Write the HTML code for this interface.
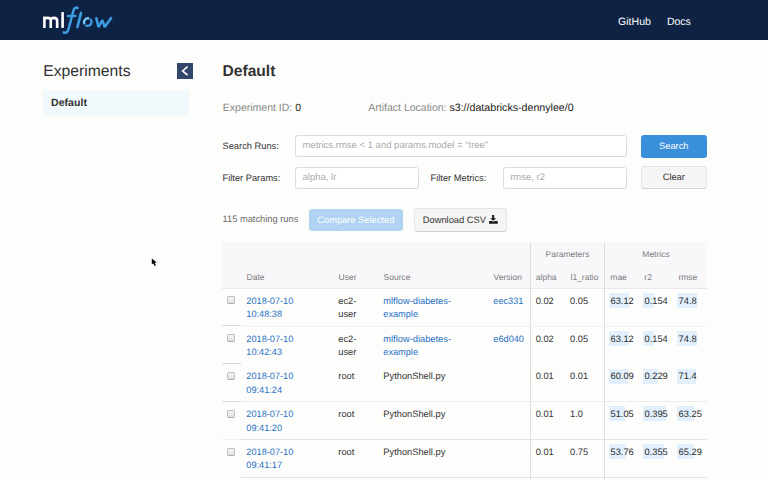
<!DOCTYPE html>
<html><head><meta charset="utf-8"><style>
html,body{margin:0;padding:0;width:768px;height:480px;overflow:hidden;background:#fdfdfc;}
body{position:relative;font-family:"Liberation Sans",sans-serif;}
.t{position:absolute;white-space:nowrap;line-height:1;text-rendering:geometricPrecision;}
.r{position:absolute;}
</style></head><body>
<div class="r" style="left:0.00px;top:0.00px;width:768.00px;height:40.00px;background:#0e2244"></div>
<svg class="r" style="left:0;top:0" width="130" height="40" viewBox="0 0 130 40">
<g fill="none" stroke="#fff" stroke-width="2.6" stroke-linecap="butt">
<path d="M44.4,27.9 V16.5 M44.4,19.6 C45.1,17.6 46.3,17.85 47.6,17.85 C49.6,17.85 50.75,18.9 50.75,20.6 V27.9 M50.75,20.6 C50.8,18.7 52.2,17.85 53.9,17.85 C56,17.85 57.15,18.9 57.15,20.8 V27.9"/>
<path d="M62.6,12.1 V27.9"/>
</g>
<g fill="none" stroke="#3d9de2" stroke-width="2.3" stroke-linecap="round">
<path d="M77.6,7.9 C76.2,7.1 74.3,7.5 73.5,10.4 L68.5,29.2 C67.7,32.4 65.3,33.4 63.7,32.4" stroke-width="2.5"/>
<path d="M66.9,16 H76.4" stroke-linecap="butt"/>
<path d="M81,12.9 L77.4,27.1" stroke-width="2.6"/>
<path d="M96.1,17.2 L98.4,27 L102.4,20.2 L104.7,27 L111.6,17.2" stroke-linejoin="bevel" stroke-linecap="butt" stroke-width="2.5"/>
</g>
<path d="M84.59,24.24 A3.85,3.85 0 0 1 89.29,18.63" fill="none" stroke="#72c8f4" stroke-width="2.3"/>
<path d="M90.22,19.17 A3.85,3.85 0 0 1 85.27,25.06" fill="none" stroke="#3d9de2" stroke-width="2.3"/>
</svg>
<div class="t" style="left:618.00px;top:17.03px;font-size:10.6px;color:#fff;font-weight:400;">GitHub</div>
<div class="t" style="left:666.90px;top:17.11px;font-size:10.5px;color:#fff;font-weight:400;">Docs</div>
<div class="t" style="left:43.30px;top:64.41px;font-size:15.7px;color:#333;font-weight:400;">Experiments</div>
<div class="r" style="left:177.00px;top:63.00px;width:16.00px;height:16.00px;background:#33476b"></div>
<svg class="r" style="left:177px;top:63px" width="16" height="16" viewBox="0 0 16 16"><path d="M10.6,3.6 L5.6,7.9 L10.6,12.2" fill="none" stroke="#fff" stroke-width="1.6"/></svg>
<div class="r" style="left:43.00px;top:90.00px;width:146.00px;height:26.00px;background:#f1f9fd"></div>
<div class="t" style="left:51.00px;top:97.53px;font-size:10.6px;color:#333;font-weight:700;">Default</div>
<div class="t" style="left:222.50px;top:64.49px;font-size:15.6px;color:#333;font-weight:700;">Default</div>
<div class="t" style="left:222.80px;top:102.61px;font-size:10.5px;color:#888;font-weight:400;">Experiment ID: <span style="color:#222">0</span></div>
<div class="t" style="left:368.30px;top:102.61px;font-size:10.5px;color:#888;font-weight:400;">Artifact Location: <span style="color:#222;font-size:10.65px">s3://databricks-dennylee/0</span></div>
<div class="t" style="left:222.50px;top:142.03px;font-size:9.3px;color:#333;font-weight:400;">Search Runs:</div>
<div class="r" style="left:295.00px;top:135.00px;width:332.00px;height:22.00px;border:1px solid #dcdcdc;border-radius:3px;background:#fff;box-sizing:border-box"></div>
<div class="t" style="left:302.50px;top:140.56px;font-size:9.5px;color:#aaa;font-weight:400;">metrics.rmse &lt; 1 and params.model = "tree"</div>
<div class="t" style="left:222.50px;top:174.03px;font-size:9.3px;color:#333;font-weight:400;">Filter Params:</div>
<div class="r" style="left:295.00px;top:167.00px;width:124.00px;height:22.00px;border:1px solid #dcdcdc;border-radius:3px;background:#fff;box-sizing:border-box"></div>
<div class="t" style="left:302.50px;top:172.56px;font-size:9.5px;color:#aaa;font-weight:400;">alpha, lr</div>
<div class="t" style="left:430.50px;top:174.03px;font-size:9.3px;color:#333;font-weight:400;">Filter Metrics:</div>
<div class="r" style="left:503.00px;top:167.00px;width:124.00px;height:22.00px;border:1px solid #dcdcdc;border-radius:3px;background:#fff;box-sizing:border-box"></div>
<div class="t" style="left:510.20px;top:172.56px;font-size:9.5px;color:#aaa;font-weight:400;">rmse, r2</div>
<div class="r" style="left:641.00px;top:135.00px;width:66.00px;height:23.00px;background:#3a8fda;border-radius:3px"></div>
<div class="t" style="left:640.6px;width:66.4px;text-align:center;top:141.53px;font-size:9.3px;color:#fff">Search</div>
<div class="r" style="left:641.00px;top:166.00px;width:66.00px;height:23.00px;background:#f5f5f5;border:1px solid #e5e5e5;border-bottom-color:#d3d3d3;border-radius:3px;box-sizing:border-box"></div>
<div class="t" style="left:640.6px;width:66.4px;text-align:center;top:173.43px;font-size:9.3px;color:#333">Clear</div>
<div class="t" style="left:222.50px;top:215.43px;font-size:9.3px;color:#6a6a6a;font-weight:400;">115 matching runs</div>
<div class="r" style="left:309.00px;top:209.00px;width:94.00px;height:22.00px;background:#b0d3f2;border-radius:3px"></div>
<div class="t" style="left:317.30px;top:216.03px;font-size:9.3px;color:#fff;font-weight:400;">Compare Selected</div>
<div class="r" style="left:414.00px;top:208.00px;width:93.00px;height:24.00px;background:#f5f5f5;border:1px solid #e5e5e5;border-bottom-color:#d3d3d3;border-radius:3px;box-sizing:border-box"></div>
<div class="t" style="left:422.70px;top:215.99px;font-size:9.35px;color:#333;font-weight:400;">Download CSV</div>
<svg class="r" style="left:480px;top:210px" width="24" height="20" viewBox="480 210 24 20"><path d="M492.1,215.1 H494.2 V218.2 H496.3 L493.15,220.8 L490,218.2 H492.1 Z" fill="#1e1e1e"/><path d="M489,221 H492.2 L493.15,221.9 L494.1,221 H497.8 V223.7 H489 Z" fill="#1e1e1e"/></svg>
<div class="r" style="left:222.00px;top:242.00px;width:485.00px;height:46.00px;background:#f8f8fb"></div>
<div class="r" style="left:222.00px;top:288.00px;width:485.00px;height:1.00px;background:#e9e9ed"></div>
<div class="r" style="left:530.00px;top:242.00px;width:1.00px;height:238.00px;background:#dddddd"></div>
<div class="r" style="left:604.00px;top:242.00px;width:1.00px;height:238.00px;background:#dddddd"></div>
<div class="t" style="left:545.50px;top:250.30px;font-size:8.5px;color:#7a7a7a;font-weight:400;">Parameters</div>
<div class="t" style="left:642.30px;top:250.30px;font-size:8.5px;color:#7a7a7a;font-weight:400;">Metrics</div>
<div class="t" style="left:246.60px;top:273.10px;font-size:8.5px;color:#7a7a7a;font-weight:400;">Date</div>
<div class="t" style="left:338.60px;top:273.10px;font-size:8.5px;color:#7a7a7a;font-weight:400;">User</div>
<div class="t" style="left:383.60px;top:273.10px;font-size:8.5px;color:#7a7a7a;font-weight:400;">Source</div>
<div class="t" style="left:493.60px;top:273.10px;font-size:8.5px;color:#7a7a7a;font-weight:400;">Version</div>
<div class="t" style="left:535.80px;top:273.10px;font-size:8.5px;color:#7a7a7a;font-weight:400;">alpha</div>
<div class="t" style="left:570.50px;top:273.10px;font-size:8.5px;color:#7a7a7a;font-weight:400;">l1_ratio</div>
<div class="t" style="left:610.30px;top:273.10px;font-size:8.5px;color:#7a7a7a;font-weight:400;">mae</div>
<div class="t" style="left:644.30px;top:273.10px;font-size:8.5px;color:#7a7a7a;font-weight:400;">r2</div>
<div class="t" style="left:678.40px;top:273.10px;font-size:8.5px;color:#7a7a7a;font-weight:400;">rmse</div>
<div class="r" style="left:227.00px;top:296.00px;width:8.00px;height:8.00px;border:1px solid #bdbdbd;border-bottom-color:#a8a8a8;border-radius:2px;background:linear-gradient(#f6f6f6,#e2e2e2);box-sizing:border-box"></div>
<div class="t" style="left:246.30px;top:296.81px;font-size:9.2px;color:#1f70c4;font-weight:400;">2018-07-10</div>
<div class="t" style="left:246.30px;top:310.11px;font-size:9.2px;color:#1f70c4;font-weight:400;">10:48:38</div>
<div class="t" style="left:338.30px;top:296.73px;font-size:9.3px;color:#333;font-weight:400;">ec2-</div>
<div class="t" style="left:338.30px;top:310.03px;font-size:9.3px;color:#333;font-weight:400;">user</div>
<div class="t" style="left:383.30px;top:296.73px;font-size:9.3px;color:#1f70c4;font-weight:400;">mlflow-diabetes-</div>
<div class="t" style="left:383.30px;top:310.11px;font-size:9.2px;color:#1f70c4;font-weight:400;">example</div>
<div class="t" style="left:493.30px;top:296.81px;font-size:9.2px;color:#1f70c4;font-weight:400;">eec331</div>
<div class="t" style="left:535.70px;top:296.73px;font-size:9.3px;color:#333;font-weight:400;">0.02</div>
<div class="t" style="left:570.00px;top:296.73px;font-size:9.3px;color:#333;font-weight:400;">0.05</div>
<div class="r" style="left:609.00px;top:293.00px;width:20.00px;height:15.00px;background:#e1f0fc"></div>
<div class="t" style="left:610.50px;top:296.73px;font-size:9.3px;color:#2a2a2a;font-weight:400;">63.12</div>
<div class="r" style="left:643.00px;top:293.00px;width:11.00px;height:15.00px;background:#e1f0fc"></div>
<div class="t" style="left:644.50px;top:296.73px;font-size:9.3px;color:#2a2a2a;font-weight:400;">0.154</div>
<div class="r" style="left:677.00px;top:293.00px;width:20.00px;height:15.00px;background:#e1f0fc"></div>
<div class="t" style="left:678.60px;top:296.73px;font-size:9.3px;color:#2a2a2a;font-weight:400;">74.8</div>
<div class="r" style="left:222.00px;top:325.00px;width:19.00px;height:1.00px;background:#dadada"></div>
<div class="r" style="left:241.00px;top:326.00px;width:466.00px;height:1.00px;background:#f1f1f3"></div>
<div class="r" style="left:227.00px;top:334.00px;width:8.00px;height:8.00px;border:1px solid #bdbdbd;border-bottom-color:#a8a8a8;border-radius:2px;background:linear-gradient(#f6f6f6,#e2e2e2);box-sizing:border-box"></div>
<div class="t" style="left:246.30px;top:334.61px;font-size:9.2px;color:#1f70c4;font-weight:400;">2018-07-10</div>
<div class="t" style="left:246.30px;top:347.91px;font-size:9.2px;color:#1f70c4;font-weight:400;">10:42:43</div>
<div class="t" style="left:338.30px;top:334.53px;font-size:9.3px;color:#333;font-weight:400;">ec2-</div>
<div class="t" style="left:338.30px;top:347.83px;font-size:9.3px;color:#333;font-weight:400;">user</div>
<div class="t" style="left:383.30px;top:334.53px;font-size:9.3px;color:#1f70c4;font-weight:400;">mlflow-diabetes-</div>
<div class="t" style="left:383.30px;top:347.91px;font-size:9.2px;color:#1f70c4;font-weight:400;">example</div>
<div class="t" style="left:493.30px;top:334.61px;font-size:9.2px;color:#1f70c4;font-weight:400;">e6d040</div>
<div class="t" style="left:535.70px;top:334.53px;font-size:9.3px;color:#333;font-weight:400;">0.02</div>
<div class="t" style="left:570.00px;top:334.53px;font-size:9.3px;color:#333;font-weight:400;">0.05</div>
<div class="r" style="left:609.00px;top:331.00px;width:20.00px;height:15.00px;background:#e1f0fc"></div>
<div class="t" style="left:610.50px;top:334.53px;font-size:9.3px;color:#2a2a2a;font-weight:400;">63.12</div>
<div class="r" style="left:643.00px;top:331.00px;width:11.00px;height:15.00px;background:#e1f0fc"></div>
<div class="t" style="left:644.50px;top:334.53px;font-size:9.3px;color:#2a2a2a;font-weight:400;">0.154</div>
<div class="r" style="left:677.00px;top:331.00px;width:20.00px;height:15.00px;background:#e1f0fc"></div>
<div class="t" style="left:678.60px;top:334.53px;font-size:9.3px;color:#2a2a2a;font-weight:400;">74.8</div>
<div class="r" style="left:222.00px;top:363.00px;width:19.00px;height:1.00px;background:#dadada"></div>
<div class="r" style="left:227.00px;top:372.00px;width:8.00px;height:8.00px;border:1px solid #bdbdbd;border-bottom-color:#a8a8a8;border-radius:2px;background:linear-gradient(#f6f6f6,#e2e2e2);box-sizing:border-box"></div>
<div class="t" style="left:246.30px;top:372.41px;font-size:9.2px;color:#1f70c4;font-weight:400;">2018-07-10</div>
<div class="t" style="left:246.30px;top:385.71px;font-size:9.2px;color:#1f70c4;font-weight:400;">09:41:24</div>
<div class="t" style="left:338.30px;top:372.33px;font-size:9.3px;color:#333;font-weight:400;">root</div>
<div class="t" style="left:383.30px;top:372.33px;font-size:9.3px;color:#333;font-weight:400;">PythonShell.py</div>
<div class="t" style="left:535.70px;top:372.33px;font-size:9.3px;color:#333;font-weight:400;">0.01</div>
<div class="t" style="left:570.00px;top:372.33px;font-size:9.3px;color:#333;font-weight:400;">0.01</div>
<div class="r" style="left:609.00px;top:369.00px;width:19.00px;height:15.00px;background:#e1f0fc"></div>
<div class="t" style="left:610.50px;top:372.33px;font-size:9.3px;color:#2a2a2a;font-weight:400;">60.09</div>
<div class="r" style="left:643.00px;top:369.00px;width:15.00px;height:15.00px;background:#e1f0fc"></div>
<div class="t" style="left:644.50px;top:372.33px;font-size:9.3px;color:#2a2a2a;font-weight:400;">0.229</div>
<div class="r" style="left:677.00px;top:369.00px;width:19.00px;height:15.00px;background:#e1f0fc"></div>
<div class="t" style="left:678.60px;top:372.33px;font-size:9.3px;color:#2a2a2a;font-weight:400;">71.4</div>
<div class="r" style="left:222.00px;top:401.00px;width:19.00px;height:1.00px;background:#dadada"></div>
<div class="r" style="left:241.00px;top:401.00px;width:466.00px;height:1.00px;background:#eeeeee"></div>
<div class="r" style="left:227.00px;top:410.00px;width:8.00px;height:8.00px;border:1px solid #bdbdbd;border-bottom-color:#a8a8a8;border-radius:2px;background:linear-gradient(#f6f6f6,#e2e2e2);box-sizing:border-box"></div>
<div class="t" style="left:246.30px;top:410.21px;font-size:9.2px;color:#1f70c4;font-weight:400;">2018-07-10</div>
<div class="t" style="left:246.30px;top:423.51px;font-size:9.2px;color:#1f70c4;font-weight:400;">09:41:20</div>
<div class="t" style="left:338.30px;top:410.13px;font-size:9.3px;color:#333;font-weight:400;">root</div>
<div class="t" style="left:383.30px;top:410.13px;font-size:9.3px;color:#333;font-weight:400;">PythonShell.py</div>
<div class="t" style="left:535.70px;top:410.13px;font-size:9.3px;color:#333;font-weight:400;">0.01</div>
<div class="t" style="left:570.00px;top:410.13px;font-size:9.3px;color:#333;font-weight:400;">1.0</div>
<div class="r" style="left:609.00px;top:406.00px;width:16.00px;height:15.00px;background:#e1f0fc"></div>
<div class="t" style="left:610.50px;top:410.13px;font-size:9.3px;color:#2a2a2a;font-weight:400;">51.05</div>
<div class="r" style="left:643.00px;top:406.00px;width:23.00px;height:15.00px;background:#e1f0fc"></div>
<div class="t" style="left:644.50px;top:410.13px;font-size:9.3px;color:#2a2a2a;font-weight:400;">0.395</div>
<div class="r" style="left:677.00px;top:406.00px;width:17.00px;height:15.00px;background:#e1f0fc"></div>
<div class="t" style="left:678.60px;top:410.13px;font-size:9.3px;color:#2a2a2a;font-weight:400;">63.25</div>
<div class="r" style="left:222.00px;top:439.00px;width:19.00px;height:1.00px;background:#f0f0f0"></div>
<div class="r" style="left:241.00px;top:439.00px;width:466.00px;height:1.00px;background:#e3e3e3"></div>
<div class="r" style="left:227.00px;top:448.00px;width:8.00px;height:8.00px;border:1px solid #bdbdbd;border-bottom-color:#a8a8a8;border-radius:2px;background:linear-gradient(#f6f6f6,#e2e2e2);box-sizing:border-box"></div>
<div class="t" style="left:246.30px;top:448.01px;font-size:9.2px;color:#1f70c4;font-weight:400;">2018-07-10</div>
<div class="t" style="left:246.30px;top:461.31px;font-size:9.2px;color:#1f70c4;font-weight:400;">09:41:17</div>
<div class="t" style="left:338.30px;top:447.93px;font-size:9.3px;color:#333;font-weight:400;">root</div>
<div class="t" style="left:383.30px;top:447.93px;font-size:9.3px;color:#333;font-weight:400;">PythonShell.py</div>
<div class="t" style="left:535.70px;top:447.93px;font-size:9.3px;color:#333;font-weight:400;">0.01</div>
<div class="t" style="left:570.00px;top:447.93px;font-size:9.3px;color:#333;font-weight:400;">0.75</div>
<div class="r" style="left:609.00px;top:444.00px;width:17.00px;height:15.00px;background:#e1f0fc"></div>
<div class="t" style="left:610.50px;top:447.93px;font-size:9.3px;color:#2a2a2a;font-weight:400;">53.76</div>
<div class="r" style="left:643.00px;top:444.00px;width:21.00px;height:15.00px;background:#e1f0fc"></div>
<div class="t" style="left:644.50px;top:447.93px;font-size:9.3px;color:#2a2a2a;font-weight:400;">0.355</div>
<div class="r" style="left:677.00px;top:444.00px;width:17.00px;height:15.00px;background:#e1f0fc"></div>
<div class="t" style="left:678.60px;top:447.93px;font-size:9.3px;color:#2a2a2a;font-weight:400;">65.29</div>
<div class="r" style="left:241.00px;top:477.00px;width:466.00px;height:1.00px;background:#e3e3e3"></div>

<svg class="r" style="left:145px;top:252px" width="20" height="20" viewBox="145 252 20 20"><path d="M151.8,258.6 L151.8,264.4 L153.3,263.3 L154.6,266 L155.9,265.5 L154.7,262.8 L156.7,262.6 Z" fill="#000"/></svg>
</body></html>
